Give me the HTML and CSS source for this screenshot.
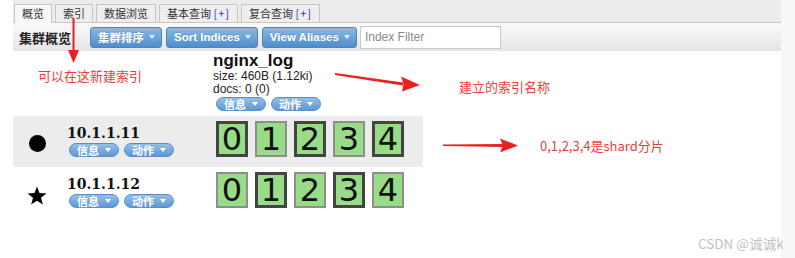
FILE: index.html
```html
<!DOCTYPE html>
<html lang="zh">
<head>
<meta charset="utf-8">
<title>集群概览</title>
<link rel="stylesheet" href="styles.css">
</head>
<body>
<div class="page">
  <div class="tabs">
    <div class="tab active">概览</div>
    <div class="tab">索引</div>
    <div class="tab">数据浏览</div>
    <div class="tab">基本查询 <span class="plus">[+]</span></div>
    <div class="tab">复合查询 <span class="plus">[+]</span></div>
  </div>
  <div class="toolbar">
    <span class="title">集群概览</span>
    <button class="btn">集群排序<i class="caret"></i></button>
    <button class="btn">Sort Indices<i class="caret"></i></button>
    <button class="btn">View Aliases<i class="caret"></i></button>
    <input class="filter" placeholder="Index Filter">
  </div>
  <div class="cluster">
    <div class="row head">
      <div></div>
      <div></div>
      <div class="index">
        <div class="iname">nginx_log</div>
        <div class="meta">size: 460B (1.12ki)</div>
        <div class="meta">docs: 0 (0)</div>
        <div class="pills"><span class="pill">信息<i class="pcaret"></i></span><span class="pill">动作<i class="pcaret"></i></span></div>
      </div>
    </div>
    <div class="row node alt">
      <div class="icon"><span class="dot"></span></div>
      <div class="nname">10.1.1.11
        <div class="pills"><span class="pill">信息<i class="pcaret"></i></span><span class="pill">动作<i class="pcaret"></i></span></div>
      </div>
      <div class="shards">
        <span class="shard primary">0</span>
        <span class="shard replica">1</span>
        <span class="shard primary">2</span>
        <span class="shard replica">3</span>
        <span class="shard primary">4</span>
      </div>
    </div>
    <div class="row node">
      <div class="icon"><svg class="star" width="20" height="19" viewBox="0 0 20 19"><polygon points="10,0.5 12.47,7.1 19.51,7.41 13.99,11.8 15.88,18.59 10,14.7 4.12,18.59 6.01,11.8 0.49,7.41 7.53,7.1" fill="#000"/></svg></div>
      <div class="nname">10.1.1.12
        <div class="pills"><span class="pill">信息<i class="pcaret"></i></span><span class="pill">动作<i class="pcaret"></i></span></div>
      </div>
      <div class="shards">
        <span class="shard replica">0</span>
        <span class="shard primary">1</span>
        <span class="shard replica">2</span>
        <span class="shard primary">3</span>
        <span class="shard replica">4</span>
      </div>
    </div>
  </div>

  <svg class="arrows" width="781" height="258" viewBox="0 0 781 258">
    <line x1="73.5" y1="18" x2="73.5" y2="52" stroke="#e8211f" stroke-width="2"/>
    <polygon points="68,50 79,50 73.5,63" fill="#e8211f"/>
    <polygon points="335,73 335,75 403,85.5 403,82.5" fill="#e8211f"/>
    <polygon points="420,85 401,76.5 403.5,84 402,91.5" fill="#e8211f"/>
    <polygon points="443,144.5 443,146 503,147 503,144" fill="#e8211f"/>
    <polygon points="518,145.5 500,138.5 503,145.5 500,152.5" fill="#e8211f"/>
  </svg>
  <div class="note n1">可以在这新建索引</div>
  <div class="note n2">建立的索引名称</div>
  <div class="note n3">0,1,2,3,4是shard分片</div>
  <div class="watermark">CSDN @诚诚k</div>
</div>
</body>
</html>
```

FILE: styles.css
```css
body {
  margin: 0;
  background: #f7f7f7;
  font-family: "Liberation Sans", "Noto Sans CJK SC", sans-serif;
  color: #222;
}

.page {
  position: relative;
  width: 781px;
  height: 258px;
  box-sizing: border-box;
  padding-left: 13px;
  background: #fff;
}

/* tabs */
.tabs {
  display: flex;
  gap: 3px;
  height: 23px;
  box-sizing: border-box;
  padding: 4px 0 0 1px;
  background: #ececec;
  border-bottom: 1px solid #c6c6c6;
}

.tab {
  padding: 0 7px;
  border: 1px solid #c6c6c6;
  border-bottom: 0;
  font-family: "Noto Sans CJK SC", sans-serif;
  font-size: 11px;
  line-height: 17px;
  color: #333;
  background: #eeeeee;
}

.tab.active {
  background: #f8f8f8;
  height: 18px;
}

.plus {
  color: #3030c8;
  letter-spacing: 1px;
}

/* toolbar */
.toolbar {
  display: flex;
  align-items: center;
  height: 28px;
  padding-left: 6px;
  background: linear-gradient(#fafafa, #e5e5e5);
}

.title {
  font-weight: bold;
  font-size: 13px;
  margin-right: 19px;
  color: #222;
  font-family: "Noto Sans CJK SC", sans-serif;
}

.btn {
  display: inline-flex;
  align-items: center;
  gap: 5px;
  height: 21px;
  margin: 0 4px 0 0;
  padding: 0 6px 0 7px;
  border: 1px solid #4b86c0;
  border-radius: 3px;
  background: linear-gradient(#8ab9e4, #4f8dcb);
  color: #fff;
  font: bold 11.5px "Liberation Sans", "Noto Sans CJK SC", sans-serif;
  text-shadow: 0 -1px 0 rgba(0, 0, 0, 0.15);
}

.caret {
  width: 0;
  height: 0;
  border-left: 3px solid transparent;
  border-right: 3px solid transparent;
  border-top: 4px solid #e8eff8;
}

.filter {
  width: 141px;
  height: 23px;
  box-sizing: border-box;
  margin-left: -1px;
  border: 1px solid #c8c8c8;
  padding: 0 4px;
  font: 12px "Liberation Sans", sans-serif;
  outline: none;
}

.filter::placeholder {
  color: #8a8a8a;
}

/* cluster table */
.row {
  display: grid;
  grid-template-columns: 54px 146px 210px;
  width: 410px;
}

.head {
  padding: 1px 0 5px;
}

.iname {
  font: bold 17px "Liberation Sans", sans-serif;
  line-height: 18px;
  color: #111;
}

.meta {
  font-size: 12px;
  line-height: 13px;
  color: #222;
}

.pills {
  display: flex;
  gap: 5px;
  margin: 1px 0 0 3px;
}

.nname .pills {
  margin: 1px 0 0 2px;
}

.pill {
  display: inline-flex;
  align-items: center;
  justify-content: center;
  gap: 6px;
  width: 50px;
  height: 14px;
  box-sizing: border-box;
  border: 1px solid #5a8fc6;
  border-radius: 7px;
  background: linear-gradient(#93c0ea, #5e98d2);
  color: #fff;
  font: bold 11px "Noto Sans CJK SC", sans-serif;
  line-height: 12px;
}

.pcaret {
  width: 0;
  height: 0;
  border-left: 3px solid transparent;
  border-right: 3px solid transparent;
  border-top: 4px solid #fff;
}

.node {
  height: 51px;
  box-sizing: border-box;
  padding-top: 5px;
}

.node.alt {
  background: #ececec;
}

.icon {
  padding: 14px 0 0 16px;
}

.dot {
  display: block;
  width: 17px;
  height: 17px;
  border-radius: 50%;
  background: #000;
}

.star {
  display: block;
  margin: 0 0 0 -2px;
}

.nname {
  padding-top: 4px;
  font: bold 14px "DejaVu Serif", serif;
  line-height: 17px;
  color: #111;
}

.shards {
  display: flex;
  gap: 7px;
  padding-left: 3px;
}

.shard {
  display: flex;
  align-items: center;
  justify-content: center;
  width: 32px;
  height: 36px;
  box-sizing: border-box;
  background: #99dc87;
  font: 32px "DejaVu Sans", sans-serif;
  line-height: 1;
  color: #111;
}

.primary {
  border: 3px solid #444;
}

.replica {
  border: 2px solid #8e8e8e;
}

/* annotations */
.arrows {
  position: absolute;
  left: 0;
  top: 0;
  pointer-events: none;
}

.note {
  position: absolute;
  color: #f03c3c;
  font: 13px "Noto Sans CJK SC", sans-serif;
  line-height: 16px;
  white-space: nowrap;
}

.n1 { left: 38px; top: 68px; }
.n2 { left: 459px; top: 79px; }
.n3 { left: 540px; top: 138px; }

.watermark {
  position: absolute;
  left: 698px;
  top: 235px;
  color: #c2c2c2;
  font: 13.5px "Noto Sans CJK SC", sans-serif;
  line-height: 16px;
  white-space: nowrap;
}
```
